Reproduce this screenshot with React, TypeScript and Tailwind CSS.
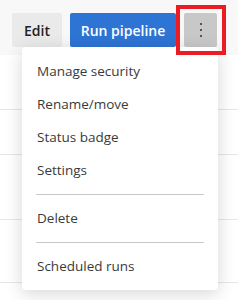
import React from 'react';

const items = ['Manage security', 'Rename/move', 'Status badge', 'Settings'];

const Divider = () => (
  <div className="h-[15px] flex items-center px-[14px]">
    <div className="h-px w-full bg-[#c8c8c8]" />
  </div>
);

const Item = ({ label }: { label: string }) => (
  <div className="h-[33px] flex items-center pl-[15px] text-[13.5px] text-[#3a3a3a]">{label}</div>
);

export default function App() {
  return (
    <div
      className="relative w-[238px] h-[300px] overflow-hidden bg-white"
      style={{ fontFamily: '"Open Sans", "Noto Sans", sans-serif' }}
    >
      {/* header bar */}
      <div className="h-[55px] bg-[#f8f8f8] flex justify-end items-start gap-2 pt-[13px] pr-[21px]">
        <button className="h-[34px] w-[50px] rounded-[2px] bg-[#eaeaea] text-[14px] font-semibold text-[#222]">
          Edit
        </button>
        <button className="h-[34px] w-[106px] rounded-[2px] bg-[#2e74d4] text-[14px] font-semibold text-white">
          Run pipeline
        </button>
        <button className="h-[34px] w-[33px] rounded-[2px] bg-[#c8c8c8] flex flex-col items-center justify-center gap-[4px]">
          <span className="block w-[2px] h-[2px] bg-[#555]" />
          <span className="block w-[2px] h-[2px] bg-[#555]" />
          <span className="block w-[2px] h-[2px] bg-[#555]" />
        </button>
      </div>

      {/* table rows behind the menu */}
      <div className="flex flex-col">
        <div className="h-[55px] border-b border-[#e6e6e6]" />
        <div className="h-[45px] border-b border-[#e6e6e6]" />
        <div className="h-[65px] border-b border-[#e6e6e6]" />
        <div className="h-[63px] border-b border-[#e6e6e6]" />
      </div>

      {/* context menu */}
      <div className="absolute left-[22px] top-[47px] w-[196px] bg-white rounded-[4px] pt-[8px] pb-[7px] shadow-[0_4px_18px_rgba(0,0,0,0.16)]">
        {items.map(i => (
          <Item key={i} label={i} />
        ))}
        <Divider />
        <Item label="Delete" />
        <Divider />
        <Item label="Scheduled runs" />
      </div>

      {/* highlight box */}
      <div className="absolute left-[176px] top-[5px] w-[50px] h-[50px] border-[4px] border-[#ec1c24]" />
    </div>
  );
}
